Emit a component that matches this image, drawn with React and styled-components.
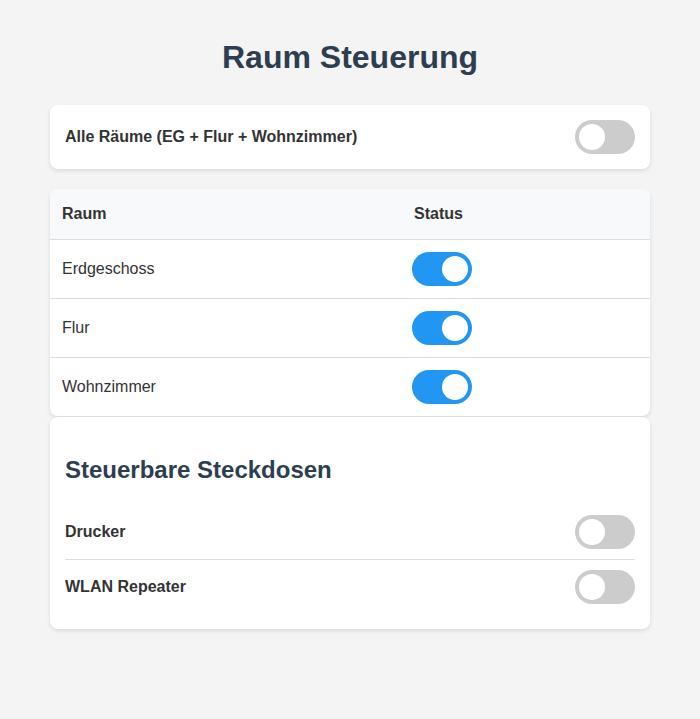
import React, {useState} from 'react';
import styled, {createGlobalStyle} from 'styled-components';

const rooms = ['Erdgeschoss', 'Flur', 'Wohnzimmer'];
const sockets = ['Drucker', 'WLAN Repeater'];

const Toggle = ({on, onChange}) => (
  <Switch $on={on} onClick={onChange}>
    <Knob $on={on} />
  </Switch>
);

const App = () => {
  const [all, setAll] = useState(false);
  const [roomState, setRoomState] = useState({Erdgeschoss: true, Flur: true, Wohnzimmer: true});
  const [socketState, setSocketState] = useState({Drucker: false, 'WLAN Repeater': false});

  return (
    <>
      <GlobalStyle />
      <Page>
        <Title>Raum Steuerung</Title>
        <Card>
          <ControlRow>
            <Label>Alle Räume (EG + Flur + Wohnzimmer)</Label>
            <Toggle on={all} onChange={() => setAll(!all)} />
          </ControlRow>
        </Card>
        <TableCard>
          <HeadRow>
            <HeadCell>Raum</HeadCell>
            <HeadCell>Status</HeadCell>
          </HeadRow>
          {rooms.map((r) => (
            <BodyRow key={r}>
              <Cell>{r}</Cell>
              <Cell>
                <Toggle on={roomState[r]} onChange={() => setRoomState({...roomState, [r]: !roomState[r]})} />
              </Cell>
            </BodyRow>
          ))}
        </TableCard>
        <SocketCard>
          <SectionTitle>Steuerbare Steckdosen</SectionTitle>
          {sockets.map((s) => (
            <SocketRow key={s}>
              <Label>{s}</Label>
              <Toggle on={socketState[s]} onChange={() => setSocketState({...socketState, [s]: !socketState[s]})} />
            </SocketRow>
          ))}
        </SocketCard>
      </Page>
    </>
  );
};

export default App;

const GlobalStyle = createGlobalStyle`
  body {
    margin: 0;
    background: #f4f4f4;
    font-family: "Liberation Sans", Arial, sans-serif;
    color: #333;
  }
`;

const Page = styled.div`
  width: 600px;
  margin: 0 auto;
  padding: 20px 0;
`;

const Title = styled.h1`
  margin: 19px 0 29px;
  font-size: 32px;
  line-height: 37px;
  text-align: center;
  color: #2c3e50;
`;

const Card = styled.div`
  background: #fff;
  border-radius: 8px;
  box-shadow: 0 2px 4px rgba(0, 0, 0, 0.1);
  padding: 15px;
`;

const ControlRow = styled.div`
  display: flex;
  align-items: center;
  justify-content: space-between;
`;

const Label = styled.span`
  font-size: 16px;
  font-weight: bold;
  color: #333;
`;

const TableCard = styled.div`
  margin-top: 20px;
  background: #fff;
  border-radius: 8px;
  box-shadow: 0 2px 4px rgba(0, 0, 0, 0.1);
  overflow: hidden;
`;

const HeadRow = styled.div`
  display: grid;
  grid-template-columns: 352px 1fr;
  height: 50px;
  align-items: center;
  background: #f8f9fa;
  border-bottom: 1px solid #ddd;
`;

const HeadCell = styled.div`
  padding: 0 12px;
  font-size: 16px;
  font-weight: bold;
  color: #333;
`;

const BodyRow = styled.div`
  display: grid;
  grid-template-columns: 352px 1fr;
  height: 58px;
  align-items: center;
  border-bottom: 1px solid #ddd;

  &:last-child {
    border-bottom: none;
  }
`;

const Cell = styled.div`
  display: flex;
  align-items: center;
  padding: 0 12px;
  font-size: 16px;
  color: #333;

  & + & {
    padding-left: 10px;
  }
`;

const SocketCard = styled(Card)`
  margin-top: 1px;
`;

const SectionTitle = styled.h2`
  margin: 24px 0 21px;
  font-size: 24px;
  line-height: 28px;
  color: #2c3e50;
`;

const SocketRow = styled.div`
  display: flex;
  align-items: center;
  justify-content: space-between;
  padding: 10px 0;
  border-bottom: 1px solid #ddd;

  &:last-child {
    border-bottom: none;
  }
`;

const Switch = styled.div`
  position: relative;
  flex-shrink: 0;
  width: 60px;
  height: 34px;
  border-radius: 34px;
  background: ${(p) => (p.$on ? '#2196f3' : '#ccc')};
  cursor: pointer;
  transition: background 0.3s;
`;

const Knob = styled.span`
  position: absolute;
  left: 4px;
  top: 4px;
  width: 26px;
  height: 26px;
  border-radius: 50%;
  background: #fff;
  transform: translateX(${(p) => (p.$on ? '26px' : '0')});
  transition: transform 0.3s;
`;
